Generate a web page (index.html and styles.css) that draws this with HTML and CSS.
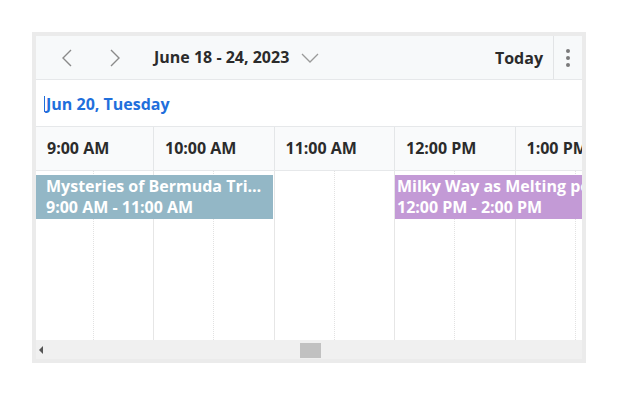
FILE: index.html
```html
<!DOCTYPE html>
<html>
<head>
<meta charset="utf-8">
<link rel="stylesheet" href="styles.css">
</head>
<body>
<div class="scheduler">
  <div class="toolbar">
    <button class="nav prev" aria-label="Previous">
      <svg width="12" height="18" viewBox="0 0 12 18"><path d="M10 1 L2 9 L10 17" fill="none" stroke="#8a8a8a" stroke-width="1.4"/></svg>
    </button>
    <button class="nav next" aria-label="Next">
      <svg width="12" height="18" viewBox="0 0 12 18"><path d="M2 1 L10 9 L2 17" fill="none" stroke="#8a8a8a" stroke-width="1.4"/></svg>
    </button>
    <div class="title">June 18 - 24, 2023</div>
    <svg class="caret" width="18" height="10" viewBox="0 0 18 10"><path d="M1 1 L9 9 L17 1" fill="none" stroke="#9a9a9a" stroke-width="1.3"/></svg>
    <div class="spacer"></div>
    <div class="today">Today</div>
    <div class="more"><span></span><span></span><span></span></div>
  </div>
  <div class="daterow"><span class="date">Jun 20, Tuesday</span></div>
  <div class="timeline">
    <div class="hours">
      <div class="hour first">9:00 AM</div>
      <div class="hour">10:00 AM</div>
      <div class="hour">11:00 AM</div>
      <div class="hour">12:00 PM</div>
      <div class="hour">1:00 PM</div>
    </div>
    <div class="grid">
      <div class="slot half" style="grid-column:1"></div>
      <div class="slot full" style="grid-column:2"></div>
      <div class="slot half" style="grid-column:3"></div>
      <div class="slot full" style="grid-column:4"></div>
      <div class="slot half" style="grid-column:5"></div>
      <div class="slot full" style="grid-column:6"></div>
      <div class="slot half" style="grid-column:7"></div>
      <div class="slot full" style="grid-column:8"></div>
      <div class="slot half" style="grid-column:9"></div>
      <div class="slot full" style="grid-column:10"></div>
      <div class="event blue">
        <div class="ev-title">Mysteries of Bermuda Tri…</div>
        <div class="ev-time">9:00 AM - 11:00 AM</div>
      </div>
      <div class="event purple">
        <div class="ev-title">Milky Way as Melting pot</div>
        <div class="ev-time">12:00 PM - 2:00 PM</div>
      </div>
    </div>
  </div>
  <div class="hscroll">
    <span class="arrow"></span>
    <span class="thumb"></span>
  </div>
</div>
</body>
</html>
```
FILE: styles.css
```css
* { box-sizing: border-box; }
html, body { margin: 0; padding: 0; background: #fff; }
body { font-family: "Open Sans", "Noto Sans", sans-serif; color: #333; }

.scheduler {
  margin: 32px 0 0 32px;
  width: 554px;
  height: 331px;
  border: 4px solid #ebebeb;
  display: flex;
  flex-direction: column;
  overflow: hidden;
  background: #fff;
}

.toolbar {
  height: 44px;
  flex: none;
  display: flex;
  align-items: center;
  background: #f7f9fa;
  border-bottom: 1px solid #e6e8ea;
}
.nav {
  border: 0;
  background: transparent;
  padding: 0;
  width: 48px;
  height: 43px;
  display: flex;
  align-items: center;
  justify-content: center;
}
.prev { margin-left: 7px; }
.title {
  margin-left: 15px;
  font-weight: 700;
  font-size: 16px;
  color: #2b2b2b;
  line-height: 43px;
}
.caret { margin-left: 12px; margin-top: 1px; }
.spacer { flex: 1; }
.today {
  font-weight: 700;
  font-size: 16px;
  color: #2b2b2b;
  padding-right: 10px;
}
.more {
  width: 29px;
  height: 43px;
  border-left: 1px solid #e2e4e6;
  display: flex;
  flex-direction: column;
  align-items: center;
  justify-content: center;
  gap: 3px;
}
.more span {
  width: 4px;
  height: 4px;
  border-radius: 50%;
  background: #7a7a7a;
}

.daterow {
  height: 47px;
  flex: none;
  display: flex;
  align-items: center;
  padding-left: 8px;
  border-bottom: 1px solid #e6e8ea;
}
.date {
  font-size: 16px;
  font-weight: 700;
  color: #1f6fdc;
  border-left: 1px solid #1f6fdc;
  padding-left: 1px;
  line-height: 16px;
  margin-top: 2px;
}

.timeline {
  flex: 1;
  display: flex;
  flex-direction: column;
  overflow: hidden;
}
.hours {
  height: 44px;
  flex: none;
  display: flex;
  background: #f9fafb;
  border-bottom: 1px solid #e6e8ea;
}
.hour {
  flex: none;
  width: 120.5px;
  border-right: 1px solid #e4e6e8;
  padding-left: 11px;
  font-size: 16px;
  font-weight: 700;
  color: #2b2b2b;
  line-height: 43px;
  white-space: nowrap;
}
.hour.first { width: 118px; }

.grid {
  flex: 1;
  display: grid;
  grid-template-columns: 57.75px repeat(9, 60.25px);
  grid-template-rows: 4px 44px 1fr;
}
.slot {
  grid-row: 1 / -1;
}
.slot.half { border-right: 1px dotted #e2e2e2; }
.slot.full { border-right: 1px solid #e6e6e6; }

.event {
  grid-row: 2;
  z-index: 1;
  color: #fff;
  font-weight: 700;
  font-size: 16px;
  line-height: 21px;
  padding: 1px 0 0 10px;
  white-space: nowrap;
  overflow: hidden;
}
.event.blue {
  grid-column: 1 / 5;
  margin-right: 2px;
  background: #93b7c6;
}
.event.purple {
  grid-column: 7 / 11;
  padding-left: 2px;
  background: #c39ad6;
}

.hscroll {
  height: 19px;
  flex: none;
  background: #f0f0f0;
  display: flex;
  align-items: center;
}
.arrow {
  width: 0;
  height: 0;
  margin-left: 3px;
  border-top: 4px solid transparent;
  border-bottom: 4px solid transparent;
  border-right: 4px solid #555;
}
.thumb {
  width: 21px;
  height: 15px;
  margin-left: 257px;
  margin-top: 2px;
  background: #c1c1c1;
}
```
